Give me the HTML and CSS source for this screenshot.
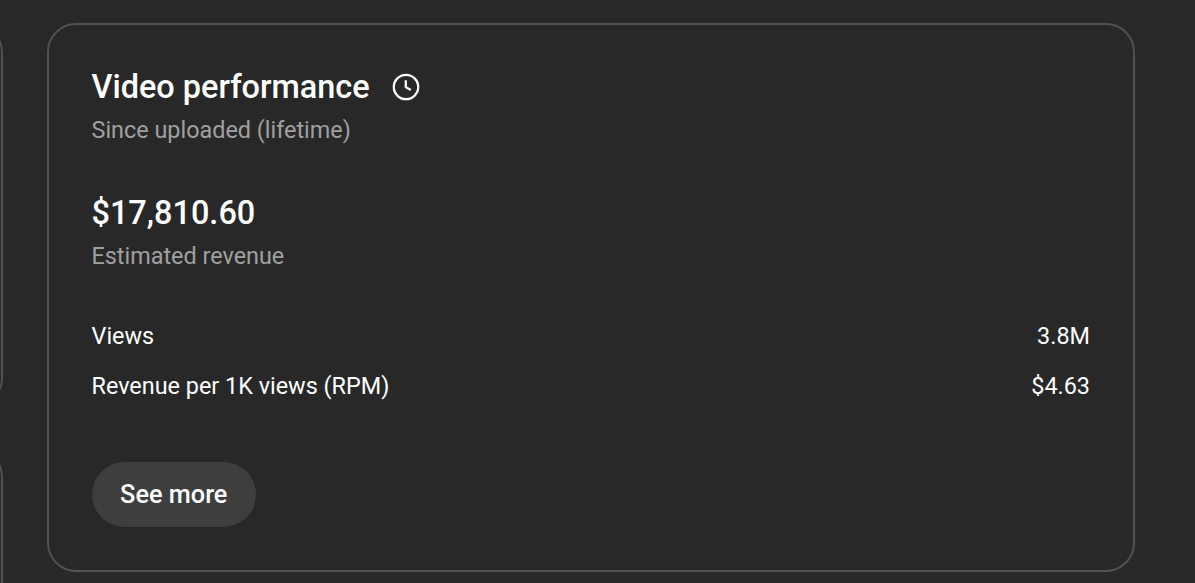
FILE: index.html
```html
<!DOCTYPE html>
<html lang="en">
<head>
    <meta charset="UTF-8">
    <meta name="viewport" content="width=device-width, initial-scale=1.0">
    <title>Video performance</title>
    <link rel="stylesheet" href="styles.css">
</head>
<body>
    <!-- Previous column, scrolled out to the left -->
    <div class="side">
        <div class="card side-card"></div>
        <div class="card side-card last"></div>
    </div>

    <div class="card main-card">
        <div class="header">
            <h1>Video performance</h1>
            <svg class="clock" viewBox="0 0 28 28" fill="none" stroke="#fff" stroke-width="2.3">
                <circle cx="14" cy="14" r="12.2"/>
                <path d="M13.8 7.2V14.2L18.8 17.1"/>
            </svg>
        </div>
        <p class="caption">Since uploaded (lifetime)</p>

        <div class="revenue">$17,810.60</div>
        <p class="caption">Estimated revenue</p>

        <div class="stats">
            <div class="row"><span>Views</span><span>3.8M</span></div>
            <div class="row"><span>Revenue per 1K views (RPM)</span><span>$4.63</span></div>
        </div>

        <button>See more</button>
    </div>
</body>
</html>
```
FILE: styles.css
```css
* {
    box-sizing: border-box;
}
body {
    font-family: Roboto, Arial, sans-serif;
    display: flex;
    align-items: flex-start;
    gap: 43.5px;
    height: 583px;
    margin: 0;
    padding-top: 23px;
    background: #282828;
    color: #fff;
    overflow: hidden;
}
.card {
    border: 2px solid #515151;
    border-radius: 29px;
}
.side {
    display: flex;
    flex-direction: column;
    align-items: flex-end;
    gap: 41px;
    width: 3px;
    flex-shrink: 0;
}
.side-card {
    width: 400px;
    height: 384px;
    flex-shrink: 0;
}
/* cut off by the bottom of the window */
.side-card.last {
    height: 135px;
    border-bottom: none;
    border-bottom-right-radius: 0;
}
.main-card {
    width: 1088.5px;
    height: 549px;
    padding: 40px 43px 0 43px;
}
.header {
    display: flex;
    align-items: center;
    gap: 22px;
    height: 44px;
}
h1 {
    margin: 0;
    font-size: 32.45px;
    font-weight: 500;
    line-height: 44px;
}
.clock {
    width: 28px;
    height: 28px;
    margin-bottom: 1px;
}
.caption {
    margin: 3px 0 0;
    font-size: 23.4px;
    line-height: 36px;
    color: #a0a0a0;
}
.revenue {
    margin-top: 43px;
    font-size: 32.45px;
    font-weight: 500;
    line-height: 44px;
}
.stats {
    margin-top: 44px;
}
.row {
    display: flex;
    justify-content: space-between;
    margin-bottom: 14px;
    font-size: 23.4px;
    line-height: 36px;
}
button {
    width: 164.5px;
    height: 65px;
    margin-top: 44px;
    padding: 0;
    border: none;
    border-radius: 33px;
    background-color: #3e3e3e;
    color: #fff;
    font-family: inherit;
    font-size: 25.3px;
    font-weight: 500;
}
```
